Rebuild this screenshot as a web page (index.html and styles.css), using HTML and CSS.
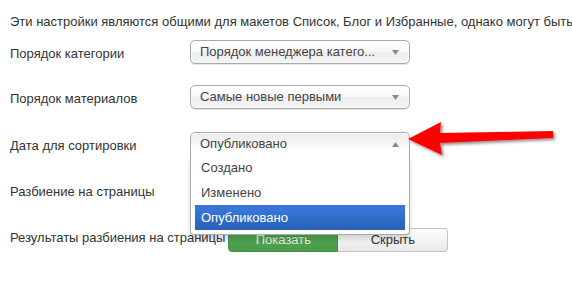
FILE: index.html
```html
<!DOCTYPE html>
<html lang="ru">
<head>
<meta charset="utf-8">
<link rel="stylesheet" href="styles.css">
</head>
<body>
<div class="page">
  <p class="intro">Эти настройки являются общими для макетов Список, Блог и Избранные, однако могут быть</p>

  <div class="row row1">
    <div class="label">Порядок категории</div>
    <div class="chosen">
      <div class="single">
        <span class="value">Порядок менеджера катего...</span>
        <svg class="caret" width="7" height="5" viewBox="0 0 7 5"><polygon points="0,0 7,0 3.5,5" fill="#8a8a8a"/></svg>
      </div>
    </div>
  </div>

  <div class="row row2">
    <div class="label">Порядок материалов</div>
    <div class="chosen">
      <div class="single">
        <span class="value">Самые новые первыми</span>
        <svg class="caret" width="7" height="5" viewBox="0 0 7 5"><polygon points="0,0 7,0 3.5,5" fill="#8a8a8a"/></svg>
      </div>
    </div>
  </div>

  <div class="row row3">
    <div class="label">Дата для сортировки</div>
    <div class="chosen open">
      <div class="single">
        <span class="value">Опубликовано</span>
        <svg class="caret" width="7" height="5" viewBox="0 0 7 5"><polygon points="0,5 7,5 3.5,0" fill="#8a8a8a"/></svg>
      </div>
      <div class="drop">
        <ul class="results">
          <li>Создано</li>
          <li>Изменено</li>
          <li class="highlighted">Опубликовано</li>
        </ul>
      </div>
    </div>
  </div>

  <div class="row row4">
    <div class="label">Разбиение на страницы</div>
    <div class="empty"></div>
  </div>

  <div class="row row5">
    <div class="label">Результаты разбиения на страницы</div>
    <div class="btn-group">
      <span class="btn btn-on">Показать</span>
      <span class="btn btn-off">Скрыть</span>
    </div>
  </div>

  <svg class="pointer" width="572" height="293" viewBox="0 0 572 293">
    <defs>
      <filter id="sh" x="-10%" y="-30%" width="130%" height="170%">
        <feGaussianBlur in="SourceAlpha" stdDeviation="1.6"/>
        <feOffset dx="2" dy="2" result="b"/>
        <feComponentTransfer><feFuncA type="linear" slope="0.45"/></feComponentTransfer>
        <feMerge><feMergeNode/><feMergeNode in="SourceGraphic"/></feMerge>
      </filter>
    </defs>
    <polygon filter="url(#sh)" fill="#ff0000" points="408,139 441,122 440,133 553,131 553,138 440,143 442,155"/>
  </svg>
</div>
</body>
</html>
```

FILE: styles.css
```css
* { box-sizing: border-box; }

html, body {
  margin: 0;
  padding: 0;
  background: #fff;
}

body {
  font-family: "Liberation Sans", Arial, sans-serif;
  font-size: 13px;
  color: #333;
  width: 572px;
  height: 293px;
  overflow: hidden;
}

.page {
  position: relative;
  padding-left: 10px;
  height: 293px;
}

.intro {
  margin: 0;
  padding-top: 13px;
  line-height: 18px;
  white-space: nowrap;
  color: #333;
}

.row {
  display: flex;
  align-items: flex-start;
}

.row1 { margin-top: 9px; }
.row2 { margin-top: 21px; }
.row3 { margin-top: 23px; }
.row4 { margin-top: 22px; }
.row5 { margin-top: 26px; }

.label {
  min-width: 180px;
  padding-top: 5px;
  padding-right: 6px;
  line-height: 18px;
  white-space: nowrap;
}

.row5 .label {
  padding-top: 1px;
  padding-right: 3px;
}

.chosen {
  position: relative;
  width: 220px;
}

.single {
  display: flex;
  align-items: center;
  height: 24px;
  padding: 0 10px 0 9px;
  border: 1px solid #aaa;
  border-radius: 5px;
  background: linear-gradient(#fff 20%, #f6f6f6 50%, #eee 52%, #f4f4f4 100%);
  box-shadow: inset 0 0 3px #fff, 0 1px 1px rgba(0, 0, 0, 0.1);
  line-height: 22px;
  color: #444;
}

.value {
  flex: 1;
  white-space: nowrap;
  overflow: hidden;
}

.caret { display: block; }

.open .single {
  border-bottom-left-radius: 0;
  border-bottom-right-radius: 0;
  background: linear-gradient(#eee 20%, #fff 80%);
  box-shadow: inset 0 1px 0 #fff;
}

.drop {
  position: absolute;
  top: 100%;
  left: 0;
  width: 220px;
  margin-top: -1px;
  background: #fff;
  border: 1px solid #aaa;
  border-top: 0;
  border-radius: 0 0 4px 4px;
  box-shadow: 0 4px 5px rgba(0, 0, 0, 0.15);
  z-index: 5;
}

.results {
  list-style: none;
  margin: 0 4px 4px 0;
  padding: 0 0 0 4px;
}

.results li {
  padding: 5px 6px;
  line-height: 15px;
  color: #444;
}

.results li.highlighted {
  background: linear-gradient(#3875d7 20%, #2a62bc 90%);
  color: #fff;
}

.empty { height: 24px; }

.btn-group {
  display: flex;
}

.btn {
  display: block;
  width: 110px;
  height: 24px;
  line-height: 22px;
  text-align: center;
  border: 1px solid #bbb;
}

.btn-on {
  background: linear-gradient(#55a955, #4b9b4b);
  border-color: #42904a;
  color: #e2f4e2;
  border-radius: 4px 0 0 4px;
  text-shadow: 0 -1px 0 rgba(0, 0, 0, 0.2);
}

.btn-off {
  background: linear-gradient(#fff, #e8e8e8);
  border-color: #c4c4c4;
  border-left: 0;
  color: #333;
  border-radius: 0 4px 4px 0;
}

.pointer {
  position: absolute;
  top: 0;
  left: 0;
  pointer-events: none;
  z-index: 10;
}
```
